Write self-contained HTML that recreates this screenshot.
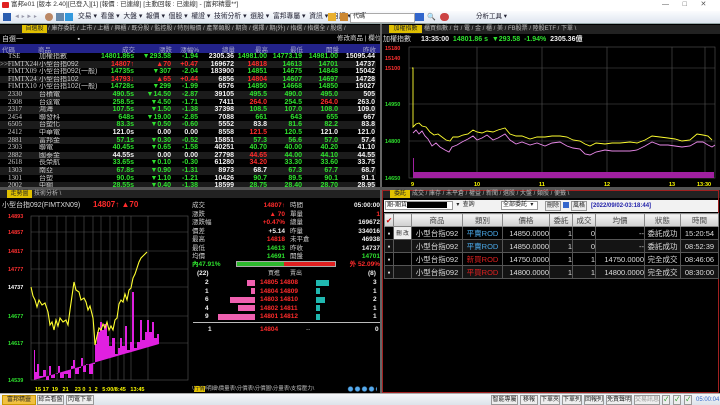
<!DOCTYPE html>
<html><head><meta charset="utf-8">
<style>
*{margin:0;padding:0;box-sizing:border-box}
body{width:720px;height:405px;overflow:hidden;background:#000;font-family:"Liberation Sans","Noto Sans CJK TC",sans-serif;font-size:7px;color:#ddd;position:relative}
.a{position:absolute;white-space:nowrap;line-height:1}
.g{color:#2ee02e}.r{color:#ff2b2b}.w{color:#f0f0f0}.y{color:#ffff30}
table{border-collapse:collapse;position:absolute;table-layout:fixed}
#q td{height:7.6px;line-height:7.6px;padding:0 1px;font-size:7px;font-weight:bold;white-space:nowrap;overflow:hidden}
#q tr:nth-child(even){background:#1b1b1b}
#q td.n{text-align:right}
#q td.c{font-weight:normal;color:#ccc}
#q td:first-child{font-family:"Liberation Serif","Noto Serif CJK SC",serif;padding-left:8px;color:#ccc}
#q tr:nth-child(2) td:first-child{padding-left:0}
.tab{position:absolute;height:8px;font-size:6px;color:#bbb;line-height:8px}
#o td{border:1px solid #555;height:13px;font-size:7.5px;color:#ddd;text-align:center;white-space:nowrap;overflow:hidden}
#o tr{height:13px}
#o th{border:1px solid #888;height:12px;font-size:7.5px;color:#444;background:linear-gradient(#f4f4f4,#cfcfcf);font-weight:normal}
#o tr.d td{background:#141414}
.btn{position:absolute;background:#eee;border:1px solid #999;color:#222;font-size:6px;line-height:9px;height:10px;text-align:center}
</style></head><body>
<div class="a" style="left:0;top:0;width:720px;height:11px;background:#fff"></div>
<div class="a" style="left:2px;top:2px;width:7px;height:6px;background:#e02020;border-radius:1px"></div>
<div class="a" style="left:11px;top:2px;font-size:6.5px;color:#333">富邦e01 [版本 2.40][已登入][1] [報價 : 已連線] [主動回報 : 已連線] - [富邦精靈**]</div>
<div class="a" style="left:662px;top:1px;font-size:7px;color:#555">—&nbsp;&nbsp;&nbsp;&nbsp;&nbsp;&nbsp;&nbsp;□&nbsp;&nbsp;&nbsp;&nbsp;&nbsp;&nbsp;&nbsp;✕</div>
<div class="a" style="left:0;top:11px;width:720px;height:13px;background:linear-gradient(#fbfcfe,#dfe6f0);border-bottom:1px solid #9aa"></div>
<div class="a" style="left:3px;top:13px;width:8px;height:8px;background:#2a5db0"></div>
<div class="a" style="left:14px;top:14px;color:#99a;font-size:6px">◄ ▸ ► ▸</div>
<div class="a" style="left:45px;top:13px;width:8px;height:8px;background:#b86;border-radius:4px"></div>
<div class="a" style="left:56px;top:13px;width:8px;height:8px;background:#68a"></div>
<div class="a" style="left:65px;top:13px;width:8px;height:8px;background:#39d"></div>
<div class="a" style="left:78px;top:14px;color:#223;font-size:6.8px">交易 ▾&nbsp;&nbsp;看盤 ▾&nbsp;&nbsp;大盤 ▾&nbsp;&nbsp;報價 ▾&nbsp;&nbsp;個股 ▾&nbsp;&nbsp;權證 ▾&nbsp;&nbsp;技術分析 ▾&nbsp;&nbsp;選股 ▾&nbsp;&nbsp;富邦專屬 ▾&nbsp;&nbsp;資訊 ▾&nbsp;&nbsp;自訂 ▾&nbsp;&nbsp;功能 ▾</div>
<div class="a" style="left:328px;top:13px;width:8px;height:8px;background:#e9b030"></div>
<div class="a" style="left:340px;top:13px;width:8px;height:8px;background:#c83"></div>
<div class="a" style="left:350px;top:13px;width:65px;height:10px;background:#fff;border:1px solid #aaa;font-size:6px;color:#222;padding-left:2px">代碼</div>
<div class="a" style="left:415px;top:13px;width:9px;height:8px;background:#36c"></div>
<div class="a" style="left:427px;top:14px;color:#36c;font-size:7px">🔍</div>
<div class="a" style="left:440px;top:13px;width:9px;height:8px;background:#c44;border-radius:4px"></div>
<div class="a" style="left:476px;top:14px;color:#223;font-size:6.5px">分析工具 ▾</div>

<div class="a" style="left:0;top:24px;width:380px;height:164px;background:#000"></div>
<div class="a" style="left:0;top:25px;width:380px;height:9px;background:#222"></div>
<div class="tab" style="left:22px;top:25px;width:25px;background:#e0c000;color:#222;text-align:center">自選股</div>
<div class="tab" style="left:48px;top:25px">/ 庫存委託 / 上市 / 上櫃 / 興櫃 / 既分股 / 監控股 / 特別報價 / 產業類股 / 期貨 / 選擇 / 期(外) / 指選 / 指選全 / 股選 /</div>
<div class="a" style="left:2px;top:36px;font-size:7px;color:#ddd">自選一&nbsp;&nbsp;&nbsp;&nbsp;&nbsp;&nbsp;&nbsp;&nbsp;&nbsp;&nbsp;&nbsp;&nbsp;&nbsp;&nbsp;&nbsp;&nbsp;&nbsp;&nbsp;&nbsp;&nbsp;&nbsp;&nbsp;&nbsp;&nbsp;&nbsp;&nbsp;&nbsp;&nbsp;▪</div>
<div class="a" style="left:337px;top:36px;font-size:6.5px;color:#ddd">修改商品 | 欄位</div>
<div class="a" style="left:0;top:44px;width:380px;height:9px;background:#23238a"></div>
<table id="h" style="left:0;top:44px;width:376px"><tr style="height:9px;font-size:6.5px;color:#aac">
<td style="width:38px;padding-left:2px">代碼</td><td style="width:62px">商品</td><td style="width:35px;text-align:right">成交</td><td style="width:37px;text-align:right">漲跌</td><td style="width:27px;text-align:right">漲幅%</td><td style="width:36px;text-align:right">總量</td><td style="width:33px;text-align:right">最高</td><td style="width:35px;text-align:right">最低</td><td style="width:36px;text-align:right">開盤</td><td style="width:37px;text-align:right">昨收</td></tr></table>
<table id="q" style="left:0;top:53px;width:376px">
<colgroup><col style="width:38px"><col style="width:62px"><col style="width:35px"><col style="width:37px"><col style="width:27px"><col style="width:36px"><col style="width:33px"><col style="width:35px"><col style="width:36px"><col style="width:37px"></colgroup>
<tr><td class="c">TSE</td><td class="c">加權指數</td><td class="n g">14801.86s</td><td class="n g">▼293.58</td><td class="n g">-1.94</td><td class="n w">2305.36</td><td class="n g">14981.00</td><td class="n g">14773.19</td><td class="n g">14981.00</td><td class="n w">15095.44</td></tr>
<tr><td class="c">&gt;&gt;FIMTX2409</td><td class="c">小型台指092</td><td class="n r">14807↑</td><td class="n r">▲70</td><td class="n r">+0.47</td><td class="n w">169672</td><td class="n r">14818</td><td class="n g">14613</td><td class="n g">14701</td><td class="n w">14737</td></tr>
<tr><td class="c">FIMTX09</td><td class="c">小型台指092(一般)</td><td class="n g">14735s</td><td class="n g">▼307</td><td class="n g">-2.04</td><td class="n w">183900</td><td class="n g">14851</td><td class="n g">14675</td><td class="n g">14848</td><td class="n w">15042</td></tr>
<tr><td class="c">FIMTX2410</td><td class="c">小型台指102</td><td class="n r">14793↓</td><td class="n r">▲65</td><td class="n r">+0.44</td><td class="n w">6856</td><td class="n r">14804</td><td class="n g">14607</td><td class="n g">14697</td><td class="n w">14728</td></tr>
<tr><td class="c">FIMTX10</td><td class="c">小型台指102(一般)</td><td class="n g">14728s</td><td class="n g">▼299</td><td class="n g">-1.99</td><td class="n w">6576</td><td class="n g">14850</td><td class="n g">14668</td><td class="n g">14850</td><td class="n w">15027</td></tr>
<tr><td class="c">2330</td><td class="c">台積電</td><td class="n g">490.5s</td><td class="n g">▼14.50</td><td class="n g">-2.87</td><td class="n w">39105</td><td class="n g">495.5</td><td class="n g">490.0</td><td class="n g">495.0</td><td class="n w">505</td></tr>
<tr><td class="c">2308</td><td class="c">台達電</td><td class="n g">258.5s</td><td class="n g">▼4.50</td><td class="n g">-1.71</td><td class="n w">7411</td><td class="n r">264.0</td><td class="n g">254.5</td><td class="n r">264.0</td><td class="n w">263.0</td></tr>
<tr><td class="c">2317</td><td class="c">鴻海</td><td class="n g">107.5s</td><td class="n g">▼1.50</td><td class="n g">-1.38</td><td class="n w">37398</td><td class="n g">108.5</td><td class="n g">107.0</td><td class="n g">108.0</td><td class="n w">109.0</td></tr>
<tr><td class="c">2454</td><td class="c">聯發科</td><td class="n g">648s</td><td class="n g">▼19.00</td><td class="n g">-2.85</td><td class="n w">7088</td><td class="n g">661</td><td class="n g">643</td><td class="n g">655</td><td class="n w">667</td></tr>
<tr><td class="c">6505</td><td class="c">台塑化</td><td class="n g">83.3s</td><td class="n g">▼0.50</td><td class="n g">-0.60</td><td class="n w">5552</td><td class="n w">83.8</td><td class="n g">81.6</td><td class="n g">82.2</td><td class="n w">83.8</td></tr>
<tr><td class="c">2412</td><td class="c">中華電</td><td class="n w">121.0s</td><td class="n w">0.00</td><td class="n w">0.00</td><td class="n w">8558</td><td class="n r">121.5</td><td class="n g">120.5</td><td class="n w">121.0</td><td class="n w">121.0</td></tr>
<tr><td class="c">2881</td><td class="c">富邦金</td><td class="n g">57.1s</td><td class="n g">▼0.30</td><td class="n g">-0.52</td><td class="n w">15851</td><td class="n g">57.3</td><td class="n g">56.6</td><td class="n g">57.0</td><td class="n w">57.4</td></tr>
<tr><td class="c">2303</td><td class="c">聯電</td><td class="n g">40.45s</td><td class="n g">▼0.65</td><td class="n g">-1.58</td><td class="n w">40251</td><td class="n g">40.70</td><td class="n g">40.00</td><td class="n g">40.20</td><td class="n w">41.10</td></tr>
<tr><td class="c">2882</td><td class="c">國泰金</td><td class="n w">44.55s</td><td class="n w">0.00</td><td class="n w">0.00</td><td class="n w">27798</td><td class="n r">44.65</td><td class="n g">44.00</td><td class="n g">44.10</td><td class="n w">44.55</td></tr>
<tr><td class="c">2618</td><td class="c">長榮航</td><td class="n g">33.65s</td><td class="n g">▼0.10</td><td class="n g">-0.30</td><td class="n w">61280</td><td class="n r">34.20</td><td class="n g">33.30</td><td class="n g">33.60</td><td class="n w">33.75</td></tr>
<tr><td class="c">1303</td><td class="c">南亞</td><td class="n g">67.8s</td><td class="n g">▼0.90</td><td class="n g">-1.31</td><td class="n w">8973</td><td class="n w">68.7</td><td class="n g">67.3</td><td class="n g">67.7</td><td class="n w">68.7</td></tr>
<tr><td class="c">1301</td><td class="c">台塑</td><td class="n g">90.0s</td><td class="n g">▼1.10</td><td class="n g">-1.21</td><td class="n w">10426</td><td class="n g">90.7</td><td class="n g">89.5</td><td class="n g">90.1</td><td class="n w">91.1</td></tr>
<tr><td class="c">2002</td><td class="c">中鋼</td><td class="n g">28.55s</td><td class="n g">▼0.40</td><td class="n g">-1.38</td><td class="n w">18599</td><td class="n g">28.75</td><td class="n g">28.40</td><td class="n g">28.70</td><td class="n w">28.95</td></tr>
</table>

<div class="a" style="left:380px;top:24px;width:2px;height:370px;background:#666"></div>
<div class="a" style="left:0;top:187px;width:720px;height:3px;background:#555"></div>

<div class="a" style="left:382px;top:25px;width:338px;height:9px;background:#222"></div>
<div class="tab" style="left:389px;top:25px;width:33px;background:#e0c000;color:#222;text-align:center">加權指數</div>
<div class="tab" style="left:424px;top:25px">櫃買指數 / 台 / 電 / 金 / 櫃 / 美 / FB股票 / 陸股ETF / 下單 \</div>
<div class="a" style="left:383px;top:36px;color:#ddd">加權指數</div>
<div class="a" style="left:421px;top:36px;font-weight:bold"><span class="w">13:35:00</span>&nbsp;&nbsp;<span class="g">14801.86 s&nbsp;&nbsp;▼293.58&nbsp;&nbsp;-1.94%</span>&nbsp;&nbsp;<span class="w">2305.36億</span></div>
<svg class="a" style="left:382px;top:44px" width="338" height="143" viewBox="382 44 338 143">
<g stroke="#555" stroke-width="0.6" fill="none">
<rect x="409" y="47" width="306" height="131"/>
<line x1="409" y1="68" x2="715" y2="68"/><line x1="409" y1="104" x2="715" y2="104"/><line x1="409" y1="141" x2="715" y2="141"/>
<line x1="477" y1="47" x2="477" y2="178"/><line x1="542" y1="47" x2="542" y2="178"/><line x1="607" y1="47" x2="607" y2="178"/><line x1="672" y1="47" x2="672" y2="178"/><line x1="705" y1="47" x2="705" y2="178"/>
</g>
<g font-size="5.5" font-weight="bold" font-family="Liberation Sans">
<text x="385" y="50" fill="#ff3030">15180</text><text x="385" y="60" fill="#ff3030">15140</text><text x="385" y="70" fill="#ff3030">15100</text>
<text x="385" y="106" fill="#2ee02e">14950</text><text x="385" y="143" fill="#2ee02e">14800</text><text x="385" y="180" fill="#2ee02e">14650</text>
<text x="411" y="186" fill="#ff0">9</text><text x="474" y="186" fill="#ff0">10</text><text x="539" y="186" fill="#ff0">11</text><text x="604" y="186" fill="#ff0">12</text><text x="669" y="186" fill="#ff0">13</text><text x="697" y="186" fill="#ff0">13:30</text>
</g>
<path d="M413 178V158h1v20M414 178v-6h300v6z" fill="#a020a0"/>
<polyline fill="none" stroke="#e888e8" stroke-width="0.9" points="413,133 416,130 419,134 422,131 425,136 428,139 432,146 436,143 440,147 445,150 449,152 452,147 457,145 462,142 468,139 473,136 477,140 482,138 487,135 493,140 498,138 505,134 510,140 516,144 522,142 530,145 537,143 545,146 552,143 560,142 567,146 573,148 580,149 585,154 590,155 596,152 605,150 612,151 620,151 630,151 637,150 645,146 652,142 660,145 668,145 675,146 682,147 690,146 697,142 703,142 708,145 712,147 715,145"/>
<polyline fill="none" stroke="#ffff30" stroke-width="0.9" points="412,68 413,68 413,127 416,124 419,123 422,126 426,127 430,132 434,135 438,134 442,137 446,140 450,141 453,137 458,137 463,135 468,134 473,130 477,132 482,133 487,131 493,132 498,130 505,128 510,134 516,136 522,136 530,139 537,137 545,137 552,136 560,136 567,137 573,140 580,141 585,144 590,146 596,143 605,144 612,143 620,143 630,142 637,143 645,140 652,136 660,137 668,138 675,139 682,141 690,140 697,134 703,135 708,136 712,140"/>
</svg>

<div class="a" style="left:0;top:190px;width:380px;height:8px;background:#222"></div>
<div class="tab" style="left:7px;top:190px;width:25px;background:#e0c000;color:#222;text-align:center">走勢圖</div>
<div class="tab" style="left:34px;top:190px">技術分析 \</div>
<div class="a" style="left:2px;top:202px;font-size:7px;color:#ddd">小型台指092(FIMTXN09)</div>
<div class="a r" style="left:93px;top:201px;font-size:8px;font-weight:bold">14807↑ ▲70</div>
<svg class="a" style="left:0;top:210px" width="192" height="184" viewBox="0 210 192 184">
<g stroke="#555" stroke-width="0.6" fill="none">
<rect x="31" y="216" width="157" height="164"/>
<line x1="31" y1="232" x2="188" y2="232"/><line x1="31" y1="251" x2="188" y2="251"/><line x1="31" y1="269" x2="188" y2="269"/><line x1="31" y1="287" x2="188" y2="287"/><line x1="31" y1="316" x2="188" y2="316"/><line x1="31" y1="343" x2="188" y2="343"/>
<line x1="39" y1="216" x2="39" y2="380"/><line x1="47" y1="216" x2="47" y2="380"/><line x1="57" y1="216" x2="57" y2="380"/><line x1="66" y1="216" x2="66" y2="380"/><line x1="75" y1="216" x2="75" y2="380"/><line x1="84" y1="216" x2="84" y2="380"/><line x1="93" y1="216" x2="93" y2="380"/><line x1="101" y1="216" x2="101" y2="380"/><line x1="110" y1="216" x2="110" y2="380"/><line x1="118" y1="216" x2="118" y2="380"/><line x1="124" y1="216" x2="124" y2="380"/><line x1="131" y1="216" x2="131" y2="380"/><line x1="148" y1="216" x2="148" y2="380"/>
</g>
<g font-size="5.5" font-weight="bold" font-family="Liberation Sans">
<text x="8" y="218" fill="#ff3030">14893</text><text x="8" y="234" fill="#ff3030">14857</text><text x="8" y="253" fill="#ff3030">14817</text><text x="8" y="271" fill="#ff3030">14777</text><text x="8" y="289" fill="#fff">14737</text><text x="8" y="318" fill="#2ee02e">14677</text><text x="8" y="345" fill="#2ee02e">14617</text><text x="8" y="382" fill="#2ee02e">14539</text>
<text x="35" y="391" fill="#ff0">15 17&#160;&#160;19&#160;&#160;&#160;21&#160;&#160;&#160;&#160;23 0&#160;&#160;1&#160;&#160;2&#160;&#160;&#160;5:00/8:45&#160;&#160;&#160;13:45</text>
</g>
<path fill="#e020e0" d="M34 380V350h1v22h2v-8h2v12h4v-6h3v10h3v-14h2v12h4v-4h3v-8h2v12h4v-4h4v4h3v-12h2v-6h2v14h4v-6h2v-10h2v14h3v-8h3v10h4v-10h2v-20h2v-12h3v-10h2v8h2v-6h3v12h2v10h3v-8h3v16h3v-6h2v-10h2v8h3v-20h2v24h3v-8h2v-50h2v56h3v-6h3v-22h2v20h3v-8h2v-12h2v12h3v-10h2v16h3v-4h2v10z"/>
<polyline fill="none" stroke="#ffff30" stroke-width="1.1" points="31,287 33,296 35,300 37,307 39,300 42,305 45,303 48,312 50,325 52,322 54,330 56,320 58,326 60,318 63,322 66,320 68,325 70,310 72,296 74,282 76,290 79,292 81,300 84,298 86,302 88,310 90,306 93,318 94,330 95,345 97,336 99,328 101,330 103,324 105,328 107,322 109,330 111,326 113,330 115,320 117,318 119,304 121,300 123,302 125,294 127,300 129,290 131,288 133,278 135,274 137,268 139,262 141,258 143,256 145,254 147,252"/>
</svg>
<div class="a" style="left:192px;top:202px;font-size:6.5px;line-height:8.5px;color:#ccc">成交<br>漲跌<br>漲跌幅<br>價差<br>最高<br>最低<br>均價</div>
<div class="a" style="left:240px;top:202px;width:45px;text-align:right;font-size:6.5px;line-height:8.5px;font-weight:bold"><span class="r">14807↑</span><br><span class="r">▲ 70</span><br><span class="r">+0.47%</span><br><span class="w">+5.14</span><br><span class="r">14818</span><br><span class="g">14613</span><br><span class="g">14691</span></div>
<div class="a" style="left:290px;top:202px;font-size:6.5px;line-height:8.5px;color:#ccc">時間<br>單量<br>總量<br>昨量<br>未平倉<br>昨收<br>開盤</div>
<div class="a" style="left:330px;top:202px;width:50px;text-align:right;font-size:6.5px;line-height:8.5px;font-weight:bold"><span class="w">05:00:00</span><br><span class="r">1</span><br><span class="w">169672</span><br><span class="w">334016</span><br><span class="w">46938</span><br><span class="w">14737</span><br><span class="g">14701</span></div>
<div class="a g" style="left:192px;top:262px;font-size:6.5px;font-weight:bold">內47.91%</div>
<div class="a" style="left:236px;top:261px;width:100px;height:6px;background:#e02020;border:1px solid #aaa"></div>
<div class="a" style="left:237px;top:262px;width:47px;height:4px;background:#2eb82e"></div>
<div class="a r" style="left:340px;top:262px;width:40px;text-align:right;font-size:6.5px;font-weight:bold">外 52.09%</div>
<div class="a w" style="left:197px;top:271px;font-size:6.5px;font-weight:bold">(22)</div>
<div class="a" style="left:268px;top:271px;font-size:6px;color:#ccc">買進&nbsp;&nbsp;&nbsp;&nbsp;&nbsp;&nbsp;賣出</div>
<div class="a w" style="left:368px;top:271px;font-size:6.5px;font-weight:bold">(8)</div>
<div class="a w" style="left:205px;top:279px;font-size:6.5px;line-height:8.5px;font-weight:bold">2<br>1<br>6<br>4<br>9</div>
<div class="a r" style="left:260px;top:279px;font-size:6.5px;line-height:8.5px;font-weight:bold">14805&nbsp;14808<br>14804&nbsp;14809<br>14803&nbsp;14810<br>14802&nbsp;14811<br>14801&nbsp;14812</div>
<div class="a w" style="left:373px;top:279px;font-size:6.5px;line-height:8.5px;font-weight:bold">3<br>1<br>2<br>1<br>1</div>
<div class="a" style="left:247px;top:280px;width:8px;height:6px;background:#f060b0"></div>
<div class="a" style="left:251px;top:288px;width:4px;height:6px;background:#f060b0"></div>
<div class="a" style="left:230px;top:297px;width:25px;height:6px;background:#f060b0"></div>
<div class="a" style="left:238px;top:305px;width:17px;height:6px;background:#f060b0"></div>
<div class="a" style="left:218px;top:314px;width:37px;height:6px;background:#f060b0"></div>
<div class="a" style="left:316px;top:280px;width:13px;height:6px;background:#20b8b0"></div>
<div class="a" style="left:316px;top:288px;width:4px;height:6px;background:#20b8b0"></div>
<div class="a" style="left:316px;top:297px;width:9px;height:6px;background:#20b8b0"></div>
<div class="a" style="left:316px;top:305px;width:4px;height:6px;background:#20b8b0"></div>
<div class="a" style="left:316px;top:314px;width:4px;height:6px;background:#20b8b0"></div>
<div class="a" style="left:193px;top:322px;width:187px;height:1px;background:#bbb"></div>
<div class="a" style="left:208px;top:327px;font-size:6.5px;font-weight:bold"><span class="w">1</span></div>
<div class="a r" style="left:260px;top:327px;font-size:6.5px;font-weight:bold">14804</div>
<div class="a" style="left:306px;top:327px;font-size:6.5px;color:#aaa">--</div>
<div class="a w" style="left:375px;top:327px;font-size:6.5px;font-weight:bold">0</div>
<div class="tab" style="left:192px;top:385px;font-size:5.5px">\<span style="background:#e0c000;color:#222">行情</span>/明細\價量表\分價表\分價圖\分量表\支撐壓力\</div>
<div class="a" style="left:347px;top:386px;width:30px;height:6px;background:radial-gradient(circle,#5ae 2px,transparent 3px) 0 0/7px 6px"></div>

<div class="a" style="left:382px;top:190px;width:338px;height:8px;background:#222"></div>
<div class="a" style="left:382px;top:190px;width:337px;height:203px;border:1px solid #a02020"></div>
<div class="tab" style="left:390px;top:190px;width:20px;background:#e0c000;color:#222;text-align:center">委託</div>
<div class="tab" style="left:412px;top:190px">成交 / 庫存 / 未平倉 / 權益 / 新聞 / 選股 / 大盤 / 類股 / 便籤 \</div>
<div class="a" style="left:384px;top:200px;width:334px;height:12px;background:#f2f2f2"></div>
<div class="a" style="left:385px;top:201px;width:68px;height:9px;background:#fff;border:1px solid #999;font-size:6px;color:#222;padding-left:1px;line-height:7px">期-期貨<span style="display:inline-block;width:40px;height:6px;background:#000;vertical-align:middle"></span></div>
<div class="btn" style="left:453px;top:201px;width:25px;border:none;background:none">▾&nbsp;&nbsp;查詢</div>
<div class="a" style="left:501px;top:201px;width:37px;height:9px;background:#fff;border:1px solid #999;font-size:6px;color:#222;line-height:7px;padding-left:1px">全部委託&nbsp;&nbsp;▾</div>
<div class="btn" style="left:545px;top:201px;width:16px">刪除</div>
<div class="a" style="left:563px;top:202px;width:6px;height:6px;background:#36c"></div>
<div class="btn" style="left:571px;top:201px;width:16px">風格</div>
<div class="a" style="left:591px;top:203px;font-size:6px;color:#22a;font-weight:bold">[2022/09/02-03:18:44]</div>
<table id="o" style="left:384px;top:213px;width:334px">
<colgroup><col style="width:9px"><col style="width:18px"><col style="width:51px"><col style="width:40px"><col style="width:47px"><col style="width:23px"><col style="width:23px"><col style="width:49px"><col style="width:36px"><col style="width:38px"></colgroup>
<tr><th style="color:#c00">✔</th><th></th><th>商品</th><th>類別</th><th>價格</th><th>委託</th><th>成交</th><th>均價</th><th>狀態</th><th>時間</th></tr>
<tr><td>▪</td><td style="font-size:5.5px;background:#eee;color:#222">刪 改</td><td>小型台指092</td><td style="color:#4aa8e8">平賣ROD</td><td style="text-align:right">14850.0000</td><td style="text-align:right">1</td><td style="text-align:right">0</td><td style="text-align:right">--</td><td>委託成功</td><td>15:20:54</td></tr>
<tr class="d"><td>▪</td><td></td><td>小型台指092</td><td style="color:#4aa8e8">平賣ROD</td><td style="text-align:right">14850.0000</td><td style="text-align:right">1</td><td style="text-align:right">0</td><td style="text-align:right">--</td><td>委託成功</td><td>08:52:39</td></tr>
<tr><td>▪</td><td></td><td>小型台指092</td><td style="color:#e02020">新買ROD</td><td style="text-align:right">14750.0000</td><td style="text-align:right">1</td><td style="text-align:right">1</td><td style="text-align:right">14750.0000</td><td>完全成交</td><td>08:46:06</td></tr>
<tr class="d"><td>▪</td><td></td><td>小型台指092</td><td style="color:#e02020">平買ROD</td><td style="text-align:right">14800.0000</td><td style="text-align:right">1</td><td style="text-align:right">1</td><td style="text-align:right">14800.0000</td><td>完全成交</td><td>08:30:00</td></tr>
</table>

<div class="a" style="left:0;top:393px;width:720px;height:12px;background:linear-gradient(#f5f7fa,#dde3ea);border-top:1px solid #aaa"></div>
<div class="btn" style="left:2px;top:395px;width:34px;background:#f0c040;border-color:#c90">富邦精靈</div>
<div class="btn" style="left:37px;top:395px;width:27px">綜合看盤</div>
<div class="btn" style="left:66px;top:395px;width:28px">閃電下單</div>
<div class="btn" style="left:491px;top:395px;width:27px">智能專屬</div>
<div class="btn" style="left:520px;top:395px;width:18px">移報</div>
<div class="btn" style="left:540px;top:395px;width:20px">下單夾</div>
<div class="btn" style="left:562px;top:395px;width:20px">下單列</div>
<div class="btn" style="left:584px;top:395px;width:20px">回報列</div>
<div class="btn" style="left:606px;top:395px;width:26px">免責聲明</div>
<div class="btn" style="left:634px;top:395px;width:26px;color:#999">交易訊息</div>
<div class="btn" style="left:662px;top:395px;width:8px;color:#080">✓</div>
<div class="btn" style="left:673px;top:395px;width:8px;color:#080">✓</div>
<div class="btn" style="left:684px;top:395px;width:8px;color:#080">✓</div>
<div class="a" style="left:696px;top:397px;font-size:6px;color:#36c">05:00:04</div>
</body></html>
